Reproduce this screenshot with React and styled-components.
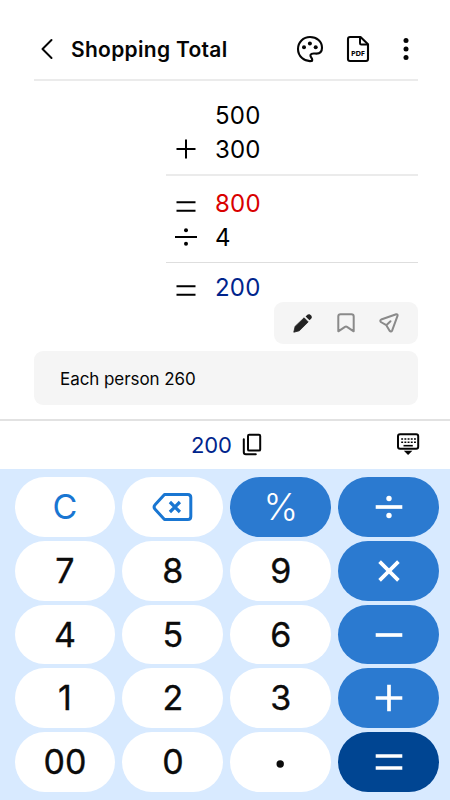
import styled, { createGlobalStyle } from 'styled-components'

const GlobalStyle = createGlobalStyle`
  * {
    box-sizing: border-box;
  }

  body {
    margin: 0;
    background-color: #fff;
    font-family: 'Inter', sans-serif;
  }

  svg {
    display: block;
    flex-shrink: 0;
    overflow: visible;
  }

  button {
    padding: 0;
    border: none;
    background-color: transparent;
    font-family: inherit;
    color: inherit;
    cursor: pointer;
  }
`

const Screen = styled.div`
  display: flex;
  flex-direction: column;
  width: 450px;
  height: 800px;
  overflow: hidden;
  background-color: #fff;
  color: #050505;
`

const Header = styled.header`
  display: flex;
  align-items: center;
  height: 81px;
  margin: 0 32px 0 34px;
  padding-top: 19px;
  border-bottom: 2px solid #ebebeb;
`

const Title = styled.h1`
  flex: 1;
  margin: 0 0 0 12px;
  padding-top: 2px;
  font-size: 21px;
  font-weight: 600;
  line-height: 28px;
  letter-spacing: 0.29px;
`

const IconButton = styled.button`
  display: flex;
  justify-content: center;
  align-items: center;
  width: ${({ $width }) => $width || 48}px;
  height: 32px;
`

const HeaderActions = styled.div`
  display: flex;
  margin-right: -12px;
`

const Tape = styled.section`
  display: flex;
  flex-direction: column;
  height: 221px;
  margin: 0 32px 0 166px;
  padding-top: 18px;
`

const TapeRow = styled.div`
  display: flex;
  flex-shrink: 0;
  align-items: center;
  height: 33.5px;
  color: ${({ $color }) => $color || '#000'};
  font-size: 24px;
  letter-spacing: 0.2px;
`

const TapeSign = styled.span`
  display: flex;
  justify-content: center;
  width: 40px;
  margin-right: 9px;
  color: #000;
`

const TapeRule = styled.hr`
  flex-shrink: 0;
  width: 100%;
  height: ${({ $height }) => $height || 2}px;
  margin: ${({ $margin }) => $margin};
  border: none;
  background-color: ${({ $height }) => ($height ? '#dedede' : '#ebebeb')};
`

const NoteTools = styled.div`
  display: flex;
  align-self: flex-end;
  align-items: center;
  width: 144px;
  height: 42px;
  margin-right: 32px;
  padding: 0 8px 0 7px;
  border-radius: 9px;
  background-color: #f5f5f5;
`

const Note = styled.p`
  display: flex;
  align-items: center;
  height: 54px;
  margin: 7px 32px 0 34px;
  padding: 1px 26px 0;
  border-radius: 9px;
  background-color: #f5f5f5;
  font-size: 17px;
  letter-spacing: -0.06px;
`

const ResultBar = styled.div`
  display: flex;
  align-items: center;
  height: 50px;
  margin-top: 14px;
  padding: 0 18px 0 191px;
  border-top: 2px solid #e2e2e2;
`

const Result = styled.output`
  flex: none;
  width: 40px;
  margin-right: 11px;
  color: #00248c;
  font-size: 22px;
  letter-spacing: -0.2px;
`

const Spacer = styled.div`
  flex: 1;
`

const Keypad = styled.div`
  display: grid;
  flex: 1;
  grid-template-columns: repeat(4, 100.8px);
  grid-auto-rows: 59.7px;
  gap: 4px 7.1px;
  padding: 8.3px 0 0 14.6px;
  background-color: #d8eaff;
`

const keyColors = {
  digit: ['#fff', '#0b0b0b'],
  edit: ['#fff', '#1976d2'],
  operator: ['#2b7ad0', '#fff'],
  equals: ['#004592', '#fff'],
}

const Key = styled.button`
  && {
    display: flex;
    justify-content: center;
    align-items: center;
    border-radius: 30px;
    background-color: ${({ $kind }) => keyColors[$kind][0]};
    color: ${({ $kind }) => keyColors[$kind][1]};
    font-size: ${({ $size }) => $size || 34}px;
    font-weight: ${({ $weight }) => $weight || 400};
    line-height: 40px;
    -webkit-text-stroke: ${({ $kind }) => ($kind === 'digit' ? 0.35 : 0)}px currentColor;
  }
`

const signPaths = {
  plus: 'M-9.5 0H9.5M0-9.5V9.5',
  equals: 'M-9.5-4.3H9.5M-9.5 4.3H9.5',
  divide: 'M-11 0H11',
}

const TapeSignIcon = ({ sign, dy = 0 }) => (
  <svg width='24' height='24' viewBox={`-12 ${-12 - dy} 24 24`}>
    <path d={signPaths[sign]} stroke='currentColor' strokeWidth='2' />
    {sign === 'divide' && (
      <g fill='currentColor'>
        <circle cy='-6.8' r='2' />
        <circle cy='6.8' r='2' />
      </g>
    )}
  </svg>
)

const keySignPaths = {
  plus: 'M-13.3 0H13.3M0-13.3V13.3',
  minus: 'M-13.3 0H13.3',
  equals: 'M-13.3-6H13.3M-13.3 6H13.3',
  divide: 'M-13.3 0H13.3',
  times: 'M-9.4-9.4L9.4 9.4M9.4-9.4L-9.4 9.4',
}

const KeySign = ({ sign }) => (
  <svg width='28' height='28' viewBox='-14 -14 28 28'>
    <path d={keySignPaths[sign]} stroke='currentColor' strokeWidth='3.7' />
    {sign === 'divide' && (
      <g fill='currentColor'>
        <circle cy='-8.5' r='2.7' />
        <circle cy='8.5' r='2.7' />
      </g>
    )}
  </svg>
)

const BackIcon = () => (
  <svg width='26' height='22' viewBox='0 0 26 22' fill='none'>
    <path
      d='M17.5 2L8.5 11L17.5 20'
      stroke='currentColor'
      strokeWidth='2'
      strokeLinecap='round'
      strokeLinejoin='round'
    />
  </svg>
)

const PaletteIcon = () => (
  <svg width='28' height='28' viewBox='0 0 28 28' fill='none'>
    <path
      d='M15.8 26C8.2 27 2 21.2 2 14C2 7.2 7.3 2 14 2C20.8 2 26 6.6 26 12.7C26 16.3 23.9 18.5 20.4 18.6C18.3 18.6 15.4 17.7 14.5 19.8C13.7 22 17.6 23.7 15.8 26Z'
      stroke='currentColor'
      strokeWidth='2.1'
      strokeLinejoin='round'
    />
    <g fill='currentColor'>
      <circle cx='8' cy='12.3' r='2' />
      <circle cx='13.9' cy='8.5' r='2' />
      <circle cx='19.7' cy='12.3' r='2' />
    </g>
  </svg>
)

const PdfIcon = () => (
  <svg width='24' height='28' viewBox='0 0 24 28' fill='none'>
    <path
      d='M4 2H14.5L22 9.2V24Q22 26 20 26H4Q2 26 2 24V4Q2 2 4 2Z'
      stroke='currentColor'
      strokeWidth='2.1'
      strokeLinejoin='round'
    />
    <path d='M14 2V8.2Q14 9.5 15.3 9.5H22' stroke='currentColor' strokeWidth='2' />
    <text
      x='12'
      y='20.9'
      textAnchor='middle'
      textLength='14'
      fill='currentColor'
      fontSize='7.6'
      fontWeight='700'
      fontFamily='"Noto Sans", sans-serif'
    >
      PDF
    </text>
  </svg>
)

const MoreIcon = () => (
  <svg width='6' height='24' viewBox='0 0 6 24' fill='currentColor'>
    <circle cx='3' cy='3.5' r='2.5' />
    <circle cx='3' cy='12' r='2.5' />
    <circle cx='3' cy='20.4' r='2.5' />
  </svg>
)

const PencilIcon = () => (
  <svg width='22' height='22' viewBox='0 0 22 22' fill='#222'>
    <path d='M1.8 20.2L3.1 14.4L12.1 5.8L16.2 9.9L7.3 18.8Z' stroke='#222' strokeWidth='0.8' strokeLinejoin='round' />
    <path d='M13.6 4.4L15.4 2.7C17.5 0.8 21.2 4.3 19.3 6.5L17.5 8.3Z' />
  </svg>
)

const BookmarkIcon = () => (
  <svg width='18' height='20' viewBox='0 0 18 20' fill='none'>
    <path
      d='M1.3 18.3V3.6Q1.3 1.3 3.6 1.3H14.4Q16.7 1.3 16.7 3.6V18.3L10 13.8Q9 13.2 8 13.8L1.3 18.3Z'
      stroke='#8a8a8a'
      strokeWidth='2'
      strokeLinejoin='round'
    />
  </svg>
)

const SendIcon = () => (
  <svg width='20' height='20' viewBox='0 0 20 20' fill='none'>
    <path
      d='M17.2 1.3L2.2 6.5Q.6 7.4 1.8 9L7.3 12.2L10.6 17.8Q12 19.3 13.1 17.7L18.6 2.7Q18.7 1.1 17.2 1.3ZM7.3 12.2L11.5 8.2'
      stroke='#8a8a8a'
      strokeWidth='2'
      strokeLinecap='round'
      strokeLinejoin='round'
    />
  </svg>
)

const CopyIcon = () => (
  <svg width='20' height='22' viewBox='0 0.5 20 22' fill='none' stroke='currentColor' strokeWidth='2'>
    <rect x='6' y='1.3' width='12.2' height='15.8' rx='1.2' />
    <path d='M1.8 5.7V18.8Q1.8 20.8 3.8 20.8H13.8' strokeLinecap='round' />
  </svg>
)

const KeyboardIcon = () => (
  <svg width='24' height='24' viewBox='0 1 24 24' fill='none' stroke='currentColor'>
    <rect x='2' y='2.2' width='20.2' height='14.6' rx='2' strokeWidth='2' />
    <path d='M5.2 7H20M5.2 10.3H20' strokeWidth='1.5' strokeDasharray='1.9 1.3' />
    <path d='M7.5 13.7H16.8' strokeWidth='1.6' />
    <path d='M7.8 18.8H16.4L12.1 23Z' fill='currentColor' stroke='none' />
  </svg>
)

const BackspaceIcon = () => (
  <svg width='40' height='28' viewBox='0.7 0 40 28' fill='none' stroke='currentColor'>
    <path
      d='M12.2 1.5H35.5Q38.5 1.5 38.5 4.5V23.5Q38.5 26.5 35.5 26.5H12.2L3 16.6Q.6 14 3 11.4Z'
      strokeWidth='3'
      strokeLinejoin='round'
    />
    <path d='M17.6 9L27.6 19M27.6 9L17.6 19' strokeWidth='3.2' />
  </svg>
)

const DotIcon = () => (
  <svg width='8' height='8' viewBox='0 0 8 8'>
    <circle cx='3.2' cy='6' r='3.7' fill='currentColor' />
  </svg>
)

const keys = [
  { name: 'clear', kind: 'edit', label: 'C', size: 34 },
  { name: 'backspace', kind: 'edit', label: <BackspaceIcon /> },
  { name: 'percent', kind: 'operator', label: '%', size: 37, weight: 300 },
  { name: 'divide', kind: 'operator', label: <KeySign sign='divide' /> },
  { name: '7', label: '7' },
  { name: '8', label: '8' },
  { name: '9', label: '9' },
  { name: 'times', kind: 'operator', label: <KeySign sign='times' /> },
  { name: '4', label: '4' },
  { name: '5', label: '5' },
  { name: '6', label: '6' },
  { name: 'minus', kind: 'operator', label: <KeySign sign='minus' /> },
  { name: '1', label: '1' },
  { name: '2', label: '2' },
  { name: '3', label: '3' },
  { name: 'plus', kind: 'operator', label: <KeySign sign='plus' /> },
  { name: '00', label: '00' },
  { name: '0', label: '0' },
  { name: 'point', label: <DotIcon /> },
  { name: 'equals', kind: 'equals', label: <KeySign sign='equals' /> },
]

const App = () => {
  return (
    <>
      <GlobalStyle />
      <Screen>
        <Header>
          <IconButton $width={25} aria-label='Back'>
            <BackIcon />
          </IconButton>
          <Title>Shopping Total</Title>
          <HeaderActions>
            <IconButton aria-label='Theme'>
              <PaletteIcon />
            </IconButton>
            <IconButton aria-label='Export'>
              <PdfIcon />
            </IconButton>
            <IconButton aria-label='More'>
              <MoreIcon />
            </IconButton>
          </HeaderActions>
        </Header>
        <Tape>
          <TapeRow>
            <TapeSign />
            500
          </TapeRow>
          <TapeRow>
            <TapeSign>
              <TapeSignIcon sign='plus' />
            </TapeSign>
            300
          </TapeRow>
          <TapeRule $margin='8px 0 11px' />
          <TapeRow $color='#d90000'>
            <TapeSign>
              <TapeSignIcon sign='equals' dy={2.5} />
            </TapeSign>
            800
          </TapeRow>
          <TapeRow>
            <TapeSign>
              <TapeSignIcon sign='divide' />
            </TapeSign>
            4
          </TapeRow>
          <TapeRule $height={1} $margin='8px 0 8px' />
          <TapeRow $color='#00248c'>
            <TapeSign>
              <TapeSignIcon sign='equals' dy={2.5} />
            </TapeSign>
            200
          </TapeRow>
        </Tape>
        <NoteTools>
          <IconButton $width={43} aria-label='Edit note'>
            <PencilIcon />
          </IconButton>
          <IconButton $width={43} aria-label='Bookmark'>
            <BookmarkIcon />
          </IconButton>
          <IconButton $width={43} aria-label='Send'>
            <SendIcon />
          </IconButton>
        </NoteTools>
        <Note>Each person 260</Note>
        <ResultBar>
          <Result>200</Result>
          <CopyIcon />
          <Spacer />
          <IconButton aria-label='Hide keypad'>
            <KeyboardIcon />
          </IconButton>
        </ResultBar>
        <Keypad>
          {keys.map(({ name, kind, label, size, weight }) => (
            <Key key={name} $kind={kind || 'digit'} $size={size} $weight={weight} aria-label={name}>
              {label}
            </Key>
          ))}
        </Keypad>
      </Screen>
    </>
  )
}

export default App
